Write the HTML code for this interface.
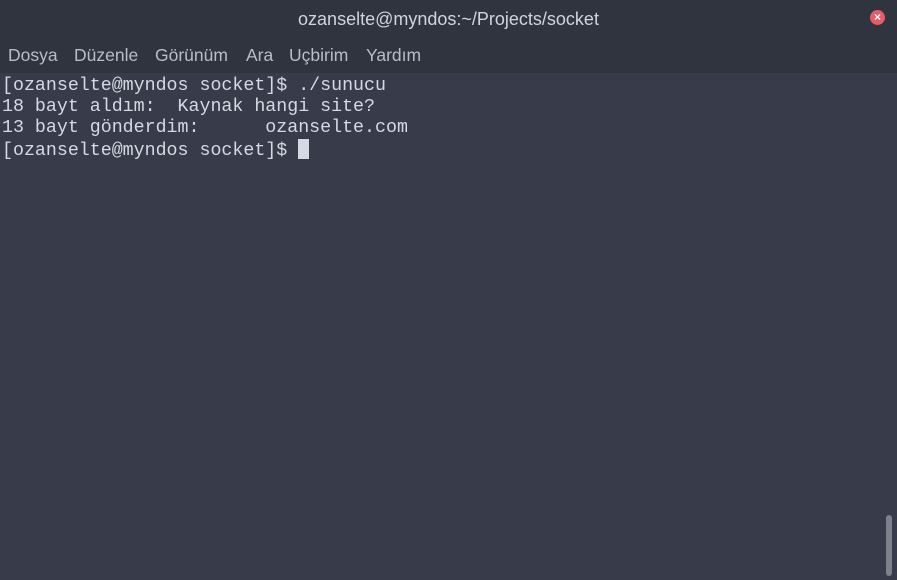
<!DOCTYPE html>
<html><head><style>
body{margin:0;width:897px;height:580px;background:#383c4a;overflow:hidden;position:relative;font-family:"Liberation Sans","DejaVu Sans",sans-serif}
.hdr{position:absolute;left:0;top:0;width:897px;height:73px;background:#2f343f}
.title{position:absolute;top:9px;left:0;width:897px;text-align:center;color:#cfd4dd;font-size:18px}
.close{position:absolute;left:870px;top:10px;width:15px;height:15px;border-radius:50%;background:#e35d6a;color:#fff;font-size:12px;line-height:15px;text-align:center;font-weight:bold}
.menu{position:absolute;top:45px;left:0;color:#b8bdc6;font-size:17.5px}
.menu span{position:absolute;white-space:nowrap}
pre{position:absolute;left:2px;top:76px;margin:0;font-family:"Liberation Mono","DejaVu Sans Mono",monospace;font-size:18.3px;line-height:21px;color:#d3dae3}
.cur{display:inline-block;width:11px;height:20px;background:#d3dae3;vertical-align:-4px}
.sb{position:absolute;left:886px;top:515px;width:6px;height:61px;border-radius:3px;background:#7c818c}
</style></head><body>
<div class="hdr"><div class="title">ozanselte@myndos:~/Projects/socket</div><div class="close">×</div>
<div class="menu"><span style="left:8px">Dosya</span><span style="left:74px">Düzenle</span><span style="left:155px">Görünüm</span><span style="left:246px">Ara</span><span style="left:289px">Uçbirim</span><span style="left:366px">Yardım</span></div></div>
<pre>[ozanselte@myndos socket]$ ./sunucu
18 bayt aldım:  Kaynak hangi site?
13 bayt gönderdim:      ozanselte.com
[ozanselte@myndos socket]$ <span class="cur"></span></pre>
<div class="sb"></div>
</body></html>
